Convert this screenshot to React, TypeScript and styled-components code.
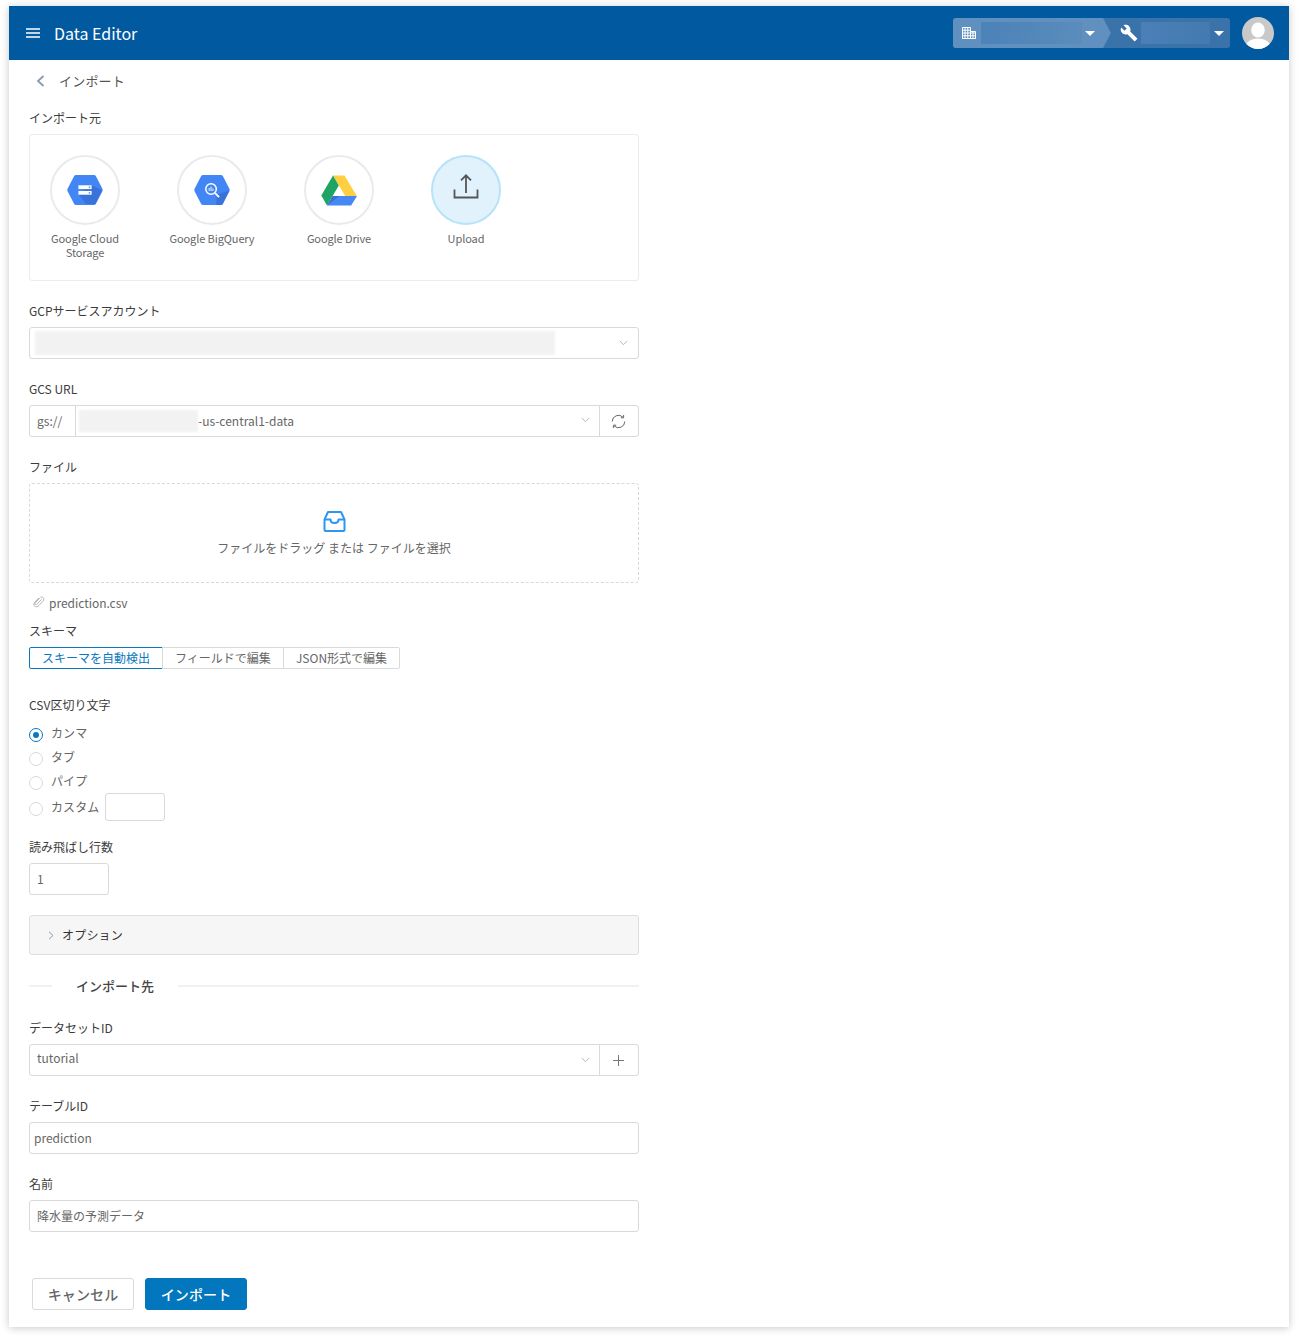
import React from "react";
import styled, { createGlobalStyle } from "styled-components";

const Global = createGlobalStyle`
  html, body { margin: 0; padding: 0; background: #fff; }
  body { font-family: "Noto Sans CJK JP", "Noto Sans", sans-serif; color: #4a4a4a; -webkit-font-smoothing: antialiased; }
  * { box-sizing: border-box; }
`;

const Page = styled.div`
  width: 1298px; height: 1338px; padding: 6px 9px 11px;
`;
const Card = styled.div`
  width: 1280px; height: 1321px; background: #fff;
  box-shadow: 0 1px 8px rgba(0,0,0,.22);
`;
const Header = styled.header`
  height: 54px; background: #01599f; display: flex; align-items: center; padding: 0 15px 0 17px; color: #fff;
`;
const Title = styled.div`
  font-size: 16px; margin-left: 14px; line-height: 54px; height: 54px; flex: 1;
`;
const Crumbs = styled.div`
  width: 277px; height: 30px; background: #3a72aa; border-radius: 3px; display: flex; align-items: center; margin-right: 12px; overflow: hidden;
`;
const CrumbFirst = styled.div`
  width: 159px; height: 30px; background: #5f90bf; padding-left: 9px; display: flex; align-items: center; flex: none;
  clip-path: polygon(0 0, 150px 0, 158px 15px, 150px 30px, 0 30px);
`;
const CrumbSecond = styled.div`
  display: flex; align-items: center; padding-left: 8px;
`;
const Redacted = styled.div<{ $w: number; $from: string; $to: string; $ml: number }>`
  width: ${p => p.$w}px; height: 22px; margin-left: ${p => p.$ml}px; flex: none;
  background: linear-gradient(100deg, ${p => p.$from}, ${p => p.$to});
`;
const Caret = styled.div<{ $ml: number }>`
  width: 0; height: 0; border-left: 5px solid transparent; border-right: 5px solid transparent; border-top: 5px solid #fff; margin-left: ${p => p.$ml}px; flex: none;
`;
const Avatar = styled.div`
  width: 32px; height: 32px; border-radius: 50%; background: #c9c9c9; overflow: hidden; flex: none;
`;
const Body = styled.div`
  padding: 0 20px; width: 650px;
`;
const BackRow = styled.div`
  height: 42px; display: flex; align-items: center; font-size: 13px; color: #555; padding-left: 7px; letter-spacing: .2px;
`;
const BackText = styled.span`
  padding-bottom: 2px;
`;
const Back = styled.span`
  display: flex; margin-right: 14px; color: #8a9bab;
`;
const Label = styled.div<{ $top?: number }>`
  font-size: 12px; line-height: 22px; height: 22px; color: #3c3c3c; margin-top: ${p => p.$top ?? 19}px; margin-bottom: 5px;
`;
const SourceBox = styled.div`
  height: 147px; border: 1px solid #ececec; border-radius: 3px; padding: 20px 0 0 20px; display: flex; align-items: flex-start; gap: 57px;
`;
const Source = styled.div`
  width: 70px; display: flex; flex-direction: column; align-items: center; flex: none;
  font-size: 11px; line-height: 14px; color: #666; text-align: center; letter-spacing: -.1px;
`;
const Circle = styled.div<{ $on?: boolean }>`
  width: 70px; height: 70px; border-radius: 50%; margin-bottom: 6px; flex: none;
  border: 2px solid ${p => (p.$on ? "#b6e3f9" : "#e8ebee")};
  background: ${p => (p.$on ? "#e1f2fc" : "#fff")};
  display: flex; align-items: center; justify-content: center;
`;
const SrcText = styled.div<{ $w: number }>`
  width: ${p => p.$w}px; flex: none;
`;
const UploadWrap = styled.span`
  display: flex; margin: -7px 1px 0 0;
`;
const Control = styled.div`
  height: 32px; border: 1px solid #d9d9d9; border-radius: 3px; display: flex; align-items: center; font-size: 12px; color: #666; background: #fff;
`;
const BlurBar = styled.div<{ $w: number; $h: number; $ml: number }>`
  width: ${p => p.$w}px; height: ${p => p.$h}px; margin-left: ${p => p.$ml}px; background: #f2f2f2; flex: none; filter: blur(1.2px);
`;
const Grow = styled.div`
  flex: 1; display: flex; align-items: center; min-width: 0;
`;
const Chev = styled.span<{ $mr: number; $mb?: number }>`
  display: flex; color: #b4b4b4; margin-right: ${p => p.$mr}px; margin-bottom: ${p => p.$mb ?? 0}px; flex: none;
`;
const Addon = styled.div<{ $side: "left" | "right"; $w: number; $pl?: number }>`
  width: ${p => p.$w}px; height: 30px; flex: none; display: flex; align-items: center; color: #666;
  justify-content: ${p => (p.$pl ? "flex-start" : "center")};
  padding-left: ${p => p.$pl ?? 0}px;
  padding-bottom: ${p => (p.$pl ? 2 : 0)}px;
  padding-right: ${p => (p.$pl ? 0 : 1)}px;
  ${p => (p.$side === "left" ? "border-right" : "border-left")}: 1px solid #d9d9d9;
`;
const Dropzone = styled.div`
  height: 100px; border: 1px dashed #d9d9d9; border-radius: 3px; display: flex; flex-direction: column; align-items: center; padding-top: 26px;
  font-size: 12px; color: #666;
`;
const DropText = styled.div`
  margin-top: 6px; line-height: 18px;
`;
const FileRow = styled.div`
  height: 20px; margin-top: 10px; display: flex; align-items: center; font-size: 12px; color: #666; padding-left: 4px;
`;
const FileName = styled.span`
  padding-bottom: 2px; letter-spacing: -.03px;
`;
const Clip = styled.span`
  display: flex; margin-right: 4px; color: #aaa; margin-top: -2px;
`;
const Segments = styled.div`
  display: flex; height: 22px;
`;
const Segment = styled.div<{ $on?: boolean; $w: number }>`
  width: ${p => p.$w}px; height: 22px; font-size: 12px; line-height: 20px; text-align: center;
  border: 1px solid ${p => (p.$on ? "#0a78bf" : "#d9d9d9")};
  color: ${p => (p.$on ? "#0a78bf" : "#666")};
  margin-left: ${p => (p.$on ? 0 : -1)}px;
  &:first-child { border-radius: 2px 0 0 2px; }
  &:last-child { border-radius: 0 2px 2px 0; }
`;
const RadioList = styled.div`
  display: flex; flex-direction: column;
`;
const RadioRow = styled.div<{ $h: number }>`
  height: ${p => p.$h}px; display: flex; align-items: center; font-size: 12px; color: #666; letter-spacing: .1px;
`;
const RadioText = styled.span`
  padding-bottom: 2px;
`;
const RadioDot = styled.span<{ $on?: boolean }>`
  width: 14px; height: 14px; border-radius: 50%; flex: none; margin-right: 8px; margin-top: 3px;
  border: 1px solid ${p => (p.$on ? "#0a78bf" : "#d9d9d9")};
  display: flex; align-items: center; justify-content: center;
  &::after { content: ""; width: 6px; height: 6px; border-radius: 50%; background: ${p => (p.$on ? "#0a78bf" : "transparent")}; }
`;
const CustomInput = styled.div`
  width: 60px; height: 28px; border: 1px solid #d9d9d9; border-radius: 3px; margin-left: 6px;
`;
const NumBox = styled(Control)`
  width: 80px; padding: 0 0 2px 7px;
`;
const Panel = styled.div`
  height: 40px; margin-top: 20px; background: #f6f6f6; border: 1px solid #dedede; border-radius: 3px; display: flex; align-items: center; padding: 0 0 2px 18px;
  font-size: 12px; color: #333; letter-spacing: .2px;
`;
const PanelChev = styled.span`
  display: flex; color: #999; margin: 2px 8px 0 0;
`;
const Divider = styled.div`
  display: flex; align-items: center; height: 22px; margin-top: 20px; margin-bottom: 8px; font-size: 13px; color: #444; font-weight: 500;
  &::before { content: ""; width: 23px; height: 2px; background: #f1f1f1; margin-right: 24px; }
  &::after { content: ""; flex: 1; height: 2px; background: #f1f1f1; margin-left: 24px; }
`;
const DividerText = styled.span`
  padding-bottom: 1px;
`;
const TextVal = styled.div<{ $pl: number; $pb: number }>`
  padding-left: ${p => p.$pl}px; padding-bottom: ${p => p.$pb}px; white-space: nowrap;
`;
const Actions = styled.div`
  display: flex; margin-top: 46px; padding-left: 3px; gap: 11px;
`;
const Btn = styled.div<{ $primary?: boolean; $w: number }>`
  width: ${p => p.$w}px; height: 32px; border-radius: 3px; display: flex; align-items: center; justify-content: center;
  font-size: 14px; font-weight: 500; letter-spacing: .15px;
  background: ${p => (p.$primary ? "#0277bd" : "#fff")};
  color: ${p => (p.$primary ? "#fff" : "#666")};
  border: 1px solid ${p => (p.$primary ? "#0277bd" : "#d9d9d9")};
`;

const Down = () => (
  <svg width="9" height="6" viewBox="0 0 9 6" fill="none" stroke="currentColor" strokeWidth="1"><path d="M.8 1l3.700 3.700L8.200 1" /></svg>
);

const Hex = ({ children }: { children: React.ReactNode }) => (
  <svg width="36" height="32" viewBox="0 0 38 34">
    <path d="M9.500 1h19c1 0 1.600.4 2 1.100l7 13.600c.4.8.4 1.700 0 2.500l-7 13.700c-.4.700-1 1.100-2 1.100h-19c-1 0-1.600-.4-2-1.100l-7-13.700c-.4-.8-.4-1.700 0-2.500l7-13.600c.4-.7 1-1.100 2-1.100z" fill="#4285f4" />
    {children}
  </svg>
);

const GcsIcon = () => (
  <Hex>
    <path d="M25 12l12.200 5-6.700 14c-.4.900-1 1-2 1h-8.500L12 21z" fill="#3367c7" opacity=".6" />
    <rect x="12" y="12" width="14" height="4" fill="#fff" />
    <rect x="12" y="18" width="14" height="4" fill="#fff" />
    <rect x="23" y="13.300" width="1.500" height="1.500" fill="#4285f4" />
    <rect x="23" y="19.300" width="1.500" height="1.500" fill="#4285f4" />
  </Hex>
);
const BqIcon = () => (
  <Hex>
    <path d="M24 22l13.400-4.500-6.900 14.400c-.4.800-1 1.100-2 1.100h-5z" fill="#3367c7" opacity=".6" />
    <circle cx="18" cy="16" r="5.600" fill="none" stroke="#fff" strokeWidth="1.600" />
    <path d="M22.300 20.300l4.200 4.200" stroke="#fff" strokeWidth="2" />
    <path d="M16 15v3M18 13.500v4.500M20 15.500v2.500" stroke="#fff" strokeWidth="1" />
  </Hex>
);
const DriveIcon = () => (
  <svg width="36" height="31" viewBox="0 0 36 31">
    <path d="M12 .5h11.500L36 21.500H24.500z" fill="#ffcf3f" />
    <path d="M12 .5l5.800 10L6 30.500l-5.700-10z" fill="#1fa463" />
    <path d="M11.800 21h24.200l-5.800 9.500H6z" fill="#4688f1" />
    <path d="M6 30.500l5.800-9.500h6.500z" fill="#3a6fd0" />
  </svg>
);
const UploadIcon = () => (
  <UploadWrap>
    <svg width="26" height="25" viewBox="0 0 26 25" fill="none" stroke="#555" strokeWidth="1.800">
      <path d="M13 19V1.500M8 6.300L13 1.300l5 5" />
      <path d="M1.500 15.500v8h23v-8" />
    </svg>
  </UploadWrap>
);
const BuildingIcon = () => (
  <svg width="14" height="14" viewBox="0 0 14 14" fill="none" stroke="#fff" strokeWidth="1">
    <path d="M.5 12.500V1.500h8v11zM8.500 5.500h5v7h-5zM.5 12.500h13M3 1.500v11M5.800 1.500v11M.5 4.200h8M.5 7h13M.5 9.800h13M11 5.500v7" />
  </svg>
);
const WrenchIcon = () => (
  <svg width="18" height="18" viewBox="0 0 24 24" fill="#fff">
    <path d="M22.700 19l-9.100-9.100c.9-2.300.4-5-1.500-6.900-2-2-5-2.400-7.400-1.300L9 6 6 9 1.600 4.700C.4 7.100.9 10.100 2.900 12.100c1.900 1.900 4.600 2.400 6.900 1.500l9.100 9.100c.4.400 1 .4 1.400 0l2.300-2.300c.5-.4.5-1.100.1-1.400z" />
  </svg>
);
const AvatarIcon = () => (
  <svg width="32" height="32" viewBox="0 0 32 32" fill="#fff">
    <ellipse cx="16" cy="13" rx="6.800" ry="7.500" />
    <path d="M3 32c0-7 6-10.500 13-10.500S29 25 29 32z" />
  </svg>
);
const Inbox = () => (
  <svg width="23" height="23" viewBox="0 0 23 23" fill="none" stroke="#2f96f0" strokeWidth="2" strokeLinejoin="round">
    <path d="M5 2h13l3.500 7.500V20a1 1 0 0 1-1 1h-18a1 1 0 0 1-1-1V9.500z" />
    <path d="M1.500 9.500h6c0 2 1.600 3.500 4 3.500s4-1.500 4-3.500h6" />
  </svg>
);
const Paper = () => (
  <svg width="12" height="12" viewBox="0 0 12 12" fill="none" stroke="currentColor" strokeWidth=".9">
    <path d="M7.500 1.200c1.700-1 3.800.6 3.200 2.700-.2.700-.7 1.200-1.200 1.700L6 9.500c-1.300 1.400-3.200 1.700-4.400.6S.8 7.200 2 6l3.800-4" />
    <path d="M8.300 3.500L4.200 8c-.6.700-1.400.7-1.900.3s-.4-1.200.2-1.800L6.800 2" />
  </svg>
);
const Sync = () => (
  <svg width="15" height="15" viewBox="0 0 15 15" fill="none" stroke="#666" strokeWidth="1">
    <path d="M1.200 7.500A6.300 6.300 0 0 1 12 3.200" />
    <path d="M13.800 7.500A6.300 6.300 0 0 1 3 11.800" />
    <path d="M12.600 1v2.800H9.800" fill="none" />
    <path d="M2.400 14v-2.800h2.800" fill="none" />
  </svg>
);
const Plus = () => (
  <svg width="11" height="11" viewBox="0 0 11 11" stroke="#777" strokeWidth="1"><path d="M5.500 0v11M0 5.500h11" /></svg>
);

export default function App() {
  return (
    <Page>
      <Global />
      <Card>
        <Header>
          <svg width="14" height="10" viewBox="0 0 14 10" stroke="#fff" strokeWidth="1.300"><path d="M0 1h14M0 5h14M0 9h14" /></svg>
          <Title>Data Editor</Title>
          <Crumbs>
            <CrumbFirst>
              <BuildingIcon />
              <Redacted $w={101} $ml={5} $from="#4b82b8" $to="#5b8cbc" />
              <Caret $ml={3} />
            </CrumbFirst>
            <CrumbSecond>
              <WrenchIcon />
              <Redacted $w={69} $ml={3} $from="#4a80b7" $to="#437aaf" />
              <Caret $ml={4} />
            </CrumbSecond>
          </Crumbs>
          <Avatar><AvatarIcon /></Avatar>
        </Header>
        <Body>
          <BackRow>
            <Back>
              <svg width="9" height="12" viewBox="0 0 9 12" fill="none" stroke="currentColor" strokeWidth="1.800"><path d="M7.500 1L2 6l5.500 5" /></svg>
            </Back>
            <BackText>インポート</BackText>
          </BackRow>
          <Label $top={5}>インポート元</Label>
          <SourceBox>
            <Source><Circle><GcsIcon /></Circle><SrcText $w={84}>Google Cloud Storage</SrcText></Source>
            <Source><Circle><BqIcon /></Circle><SrcText $w={110}>Google BigQuery</SrcText></Source>
            <Source><Circle><DriveIcon /></Circle><SrcText $w={110}>Google Drive</SrcText></Source>
            <Source><Circle $on><UploadIcon /></Circle><SrcText $w={110}>Upload</SrcText></Source>
          </SourceBox>

          <Label>GCPサービスアカウント</Label>
          <Control>
            <Grow><BlurBar $w={520} $h={24} $ml={5} /></Grow>
            <Chev $mr={10}><Down /></Chev>
          </Control>

          <Label>GCS URL</Label>
          <Control>
            <Addon $side="left" $w={46} $pl={7}>gs://</Addon>
            <Grow>
              <BlurBar $w={119} $h={22} $ml={3} />
              <TextVal $pl={0} $pb={2}>-us-central1-data</TextVal>
            </Grow>
            <Chev $mr={9} $mb={2}><Down /></Chev>
            <Addon $side="right" $w={39}><Sync /></Addon>
          </Control>

          <Label>ファイル</Label>
          <Dropzone>
            <Inbox />
            <DropText>ファイルをドラッグ または ファイルを選択</DropText>
          </Dropzone>
          <FileRow><Clip><Paper /></Clip><FileName>prediction.csv</FileName></FileRow>

          <Label $top={7}>スキーマ</Label>
          <Segments>
            <Segment $on $w={134}>スキーマを自動検出</Segment>
            <Segment $w={122}>フィールドで編集</Segment>
            <Segment $w={117}>JSON形式で編集</Segment>
          </Segments>

          <Label $top={25}>CSV区切り文字</Label>
          <RadioList>
            <RadioRow $h={24}><RadioDot $on /><RadioText>カンマ</RadioText></RadioRow>
            <RadioRow $h={24}><RadioDot /><RadioText>タブ</RadioText></RadioRow>
            <RadioRow $h={24}><RadioDot /><RadioText>パイプ</RadioText></RadioRow>
            <RadioRow $h={28}><RadioDot /><RadioText>カスタム</RadioText><CustomInput /></RadioRow>
          </RadioList>

          <Label $top={15}>読み飛ばし行数</Label>
          <NumBox>1</NumBox>

          <Panel>
            <PanelChev>
              <svg width="6" height="9" viewBox="0 0 6 9" fill="none" stroke="currentColor" strokeWidth="1"><path d="M1 .8l4 3.700-4 3.700" /></svg>
            </PanelChev>
            オプション
          </Panel>

          <Divider><DividerText>インポート先</DividerText></Divider>

          <Label $top={20}>データセットID</Label>
          <Control>
            <Grow><TextVal $pl={7} $pb={5}>tutorial</TextVal></Grow>
            <Chev $mr={9} $mb={1}><Down /></Chev>
            <Addon $side="right" $w={39}><Plus /></Addon>
          </Control>

          <Label>テーブルID</Label>
          <Control><TextVal $pl={4} $pb={2}>prediction</TextVal></Control>

          <Label>名前</Label>
          <Control><TextVal $pl={7} $pb={2}>降水量の予測データ</TextVal></Control>

          <Actions>
            <Btn $w={102}>キャンセル</Btn>
            <Btn $primary $w={102}>インポート</Btn>
          </Actions>
        </Body>
      </Card>
    </Page>
  );
}
